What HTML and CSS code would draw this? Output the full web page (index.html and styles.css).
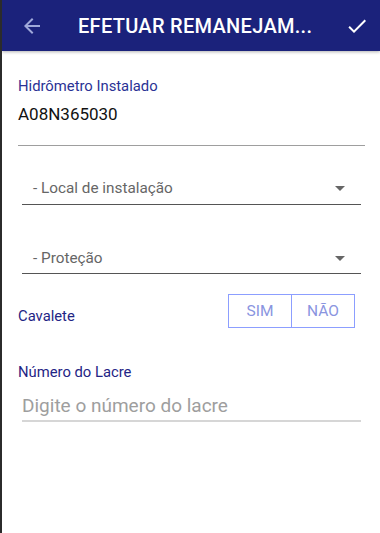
FILE: index.html
```html
<!DOCTYPE html>
<html>
<head>
<meta charset="utf-8">
<link rel="stylesheet" href="styles.css">
</head>
<body>
<div class="app">
  <header class="bar">
    <span class="back">
      <svg width="24" height="24" viewBox="0 0 24 24"><path d="M20 11H7.83l5.59-5.59L12 4l-8 8 8 8 1.41-1.41L7.83 13H20v-2z" fill="#9fa8da"/></svg>
    </span>
    <h1 class="title">EFETUAR REMANEJAM...</h1>
    <span class="ok">
      <svg width="24" height="24" viewBox="0 0 24 24"><path d="M9 16.17L4.83 12l-1.42 1.41L9 19 21 7l-1.41-1.41z" fill="#ffffff"/></svg>
    </span>
  </header>
  <main class="form">
    <div class="field">
      <div class="label">Hidrômetro Instalado</div>
      <div class="value">A08N365030</div>
    </div>
    <div class="select first">
      <span>- Local de instalação</span>
      <span class="caret"></span>
    </div>
    <div class="select">
      <span>- Proteção</span>
      <span class="caret"></span>
    </div>
    <div class="toggle-row">
      <span class="label2">Cavalete</span>
      <div class="toggle">
        <span class="opt">SIM</span>
        <span class="opt">NÃO</span>
      </div>
    </div>
    <div class="lacre">
      <div class="label2">Número do Lacre</div>
      <div class="input">Digite o número do lacre</div>
    </div>
  </main>
</div>
</body>
</html>
```
FILE: styles.css
```css
html, body { margin: 0; padding: 0; }
body {
  font-family: Roboto, "Noto Sans", sans-serif;
  background: #fff;
}
.app {
  width: 380px;
  height: 533px;
  border-left: 2px solid #2b2b2b;
  box-sizing: border-box;
  overflow: hidden;
}
.bar {
  height: 51px;
  background: #1b227b;
  display: flex;
  align-items: center;
  box-shadow: 0 1px 3px rgba(0,0,0,0.3);
}
.back {
  width: 24px; height: 24px;
  margin-left: 18px;
  display: flex;
}
.title {
  margin: 0 0 0 34px;
  color: #fff;
  font-size: 20px;
  font-weight: 500;
  letter-spacing: 0.3px;
  white-space: nowrap;
}
.ok {
  margin-left: auto;
  margin-right: 11px;
  width: 24px; height: 24px;
  display: flex;
}
.form {
  padding: 0 15px 0 16px;
}
.field {
  padding-top: 26px;
  border-bottom: 1px solid #9e9e9e;
  height: 68px;
}
.label {
  color: #2a3295;
  font-size: 14.8px;
  line-height: 18px;
}
.value {
  margin-top: 9px;
  font-size: 17px;
  line-height: 20px;
  color: #111;
}
.select {
  margin: 0 4px 0 4px;
  display: flex;
  align-items: flex-end;
  justify-content: space-between;
  height: 35px;
  margin-top: 24px;
  border-bottom: 1px solid #555;
  color: #666;
  font-size: 15.3px;
  padding-left: 11px;
  box-sizing: border-box;
  padding-bottom: 7px;
}
.select + .select { margin-top: 34px; padding-bottom: 6px; }
.caret {
  width: 0; height: 0;
  border-left: 5px solid transparent;
  border-right: 5px solid transparent;
  border-top: 5px solid #666;
  margin-right: 16px;
  margin-bottom: 6px;
}
.toggle-row {
  display: flex;
  align-items: center;
  justify-content: space-between;
  margin-top: 20px;
  margin-right: 10px;
}
.label2 {
  color: #1f2585;
  font-size: 14.8px;
  line-height: 18px;
}
.toggle-row .label2 { margin-top: 9px; }
.toggle {
  display: flex;
  border: 1px solid #8c9eff;
  height: 34px;
  box-sizing: border-box;
}
.opt {
  width: 62px;
  display: flex;
  align-items: center;
  justify-content: center;
  color: #8a95df;
  font-size: 15.5px;
}
.opt + .opt { border-left: 1px solid #8c9eff; }
.lacre {
  margin-top: 35px;
}
.input {
  margin: 13px 4px 0 4px;
  font-size: 19px;
  line-height: 24px;
  color: #9e9e9e;
  padding-bottom: 2px;
  border-bottom: 2px solid #d6d6d6;
}
```
